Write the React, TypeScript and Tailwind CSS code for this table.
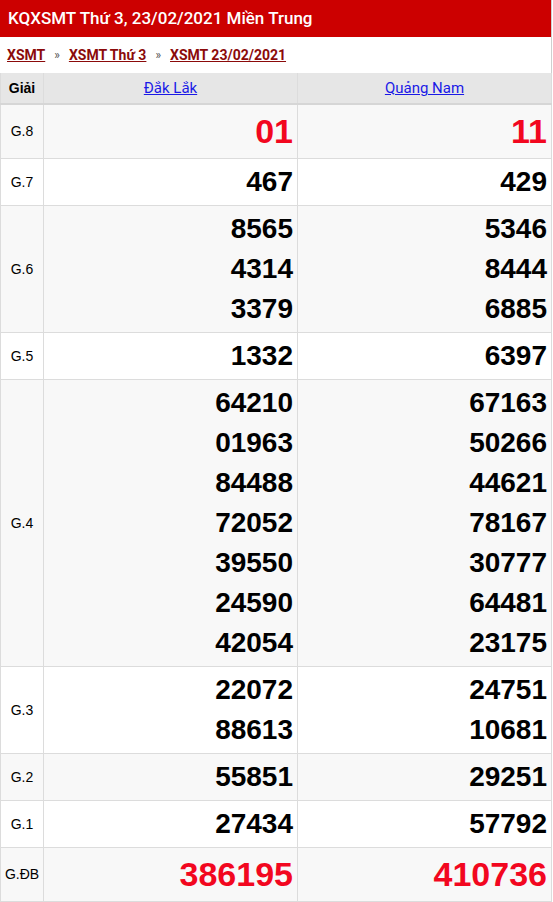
import React from 'react';

interface Prize {
  label: string;
  left: string[];
  right: string[];
  big?: boolean;
}

const prizes: Prize[] = [
  { label: 'G.8', left: ['01'], right: ['11'], big: true },
  { label: 'G.7', left: ['467'], right: ['429'] },
  { label: 'G.6', left: ['8565', '4314', '3379'], right: ['5346', '8444', '6885'] },
  { label: 'G.5', left: ['1332'], right: ['6397'] },
  {
    label: 'G.4',
    left: ['64210', '01963', '84488', '72052', '39550', '24590', '42054'],
    right: ['67163', '50266', '44621', '78167', '30777', '64481', '23175'],
  },
  { label: 'G.3', left: ['22072', '88613'], right: ['24751', '10681'] },
  { label: 'G.2', left: ['55851'], right: ['29251'] },
  { label: 'G.1', left: ['27434'], right: ['57792'] },
  { label: 'G.ĐB', left: ['386195'], right: ['410736'], big: true },
];

const NumberCell: React.FC<{ nums: string[]; big?: boolean }> = ({ nums, big }) => (
  <td className="border border-[#dcdcdc] pt-[3px] pb-[3px] pr-[4px] text-right align-middle">
    {nums.map((n, i) => (
      <div
        key={i}
        className={
          big
            ? 'text-[34px] leading-[47px] font-bold text-[#f2071f]'
            : 'text-[28px] leading-[40px] font-bold text-black'
        }
      >
        {n}
      </div>
    ))}
  </td>
);

const App: React.FC = () => {
  return (
    <div className="w-[552px] min-h-[902px] bg-white border-r border-[#cfcfcf] font-['Liberation_Sans',Arial,sans-serif]">
      <div className="h-[37px] bg-[#cc0000] pl-2 flex items-center">
        <h1 className="text-white text-[17px] font-medium font-['Roboto',sans-serif]">
          KQXSMT Thứ 3, 23/02/2021 Miền Trung
        </h1>
      </div>
      <div className="h-[36px] flex items-center pl-[7px] text-[14px] font-bold font-['Roboto',sans-serif]">
        <a href="#" className="text-[#8b0a0a] underline">XSMT</a>
        <span className="text-[#555] font-normal text-[12px] mx-[9px]">»</span>
        <a href="#" className="text-[#8b0a0a] underline">XSMT Thứ 3</a>
        <span className="text-[#555] font-normal text-[12px] mx-[9px]">»</span>
        <a href="#" className="text-[#8b0a0a] underline">XSMT 23/02/2021</a>
      </div>
      <table className="w-[551px] border-collapse table-fixed">
        <colgroup>
          <col className="w-[43px]" />
          <col className="w-[254px]" />
          <col className="w-[254px]" />
        </colgroup>
        <thead>
          <tr className="h-[31px] bg-[#e6e6e6] border-b-2 border-[#d6d6d6]">
            <th className="border-x border-[#dcdcdc] text-[14px] font-bold text-black">Giải</th>
            <th className="border-x border-[#dcdcdc] font-normal">
              <a href="#" className="text-[15px] text-[#1a1ae6] underline font-['Roboto',sans-serif]">Đắk Lắk</a>
            </th>
            <th className="border-x border-[#dcdcdc] font-normal">
              <a href="#" className="text-[15px] text-[#1a1ae6] underline font-['Roboto',sans-serif]">Quảng Nam</a>
            </th>
          </tr>
        </thead>
        <tbody>
          {prizes.map((p, i) => (
            <tr key={p.label} className={i % 2 === 0 ? 'bg-[#f8f8f8]' : 'bg-white'}>
              <td className="border border-[#dcdcdc] text-center text-[14px] text-black align-middle">
                {p.label}
              </td>
              <NumberCell nums={p.left} big={p.big} />
              <NumberCell nums={p.right} big={p.big} />
            </tr>
          ))}
        </tbody>
      </table>
    </div>
  );
};

export default App;
